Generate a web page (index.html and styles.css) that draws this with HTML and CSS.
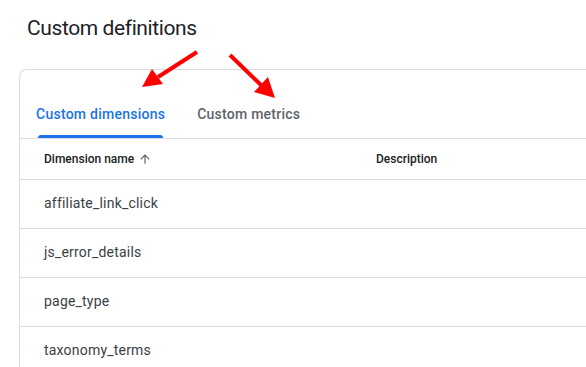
FILE: index.html
```html
<!DOCTYPE html>
<html lang="en">
<head>
  <meta charset="UTF-8">
  <title>Custom definitions</title>
  <link rel="stylesheet" href="styles.css">
</head>
<body>
  <div class="page">
    <h1 class="title">Custom definitions</h1>

    <div class="card">
      <div class="tabs">
        <div class="tab active">Custom dimensions</div>
        <div class="tab">Custom metrics</div>
      </div>

      <div class="row head">
        <div class="col-name">Dimension name
          <svg class="sort" width="14" height="14" viewBox="0 0 24 24"><path d="M4 12l1.41 1.41L11 7.83V20h2V7.83l5.58 5.59L20 12l-8-8-8 8z" fill="#5f6368"/></svg>
        </div>
        <div class="col-desc">Description</div>
      </div>
      <div class="row"><div class="col-name">affiliate_link_click</div><div class="col-desc"></div></div>
      <div class="row"><div class="col-name">js_error_details</div><div class="col-desc"></div></div>
      <div class="row"><div class="col-name">page_type</div><div class="col-desc"></div></div>
      <div class="row"><div class="col-name">taxonomy_terms</div><div class="col-desc"></div></div>
    </div>

    <!-- annotation arrows -->
    <svg class="arrows" width="586" height="367" viewBox="0 0 586 367">
      <line x1="197" y1="52" x2="158" y2="77" stroke="#f00" stroke-width="4"/>
      <polygon points="142,87 152,69 163,84" fill="#f00"/>
      <line x1="230" y1="55" x2="262" y2="86" stroke="#f00" stroke-width="4"/>
      <polygon points="275,98 254,92 268,77" fill="#f00"/>
    </svg>
  </div>
</body>
</html>
```
FILE: styles.css
```css
html, body {
  margin: 0;
  background: #fff;
  overflow: hidden;
}
body {
  font-family: Roboto, "Liberation Sans", sans-serif;
  color: #3c4043;
}
.page {
  position: relative;
  padding: 14px 0 0 19px;
  height: 367px;
  box-sizing: border-box;
}
.title {
  margin: 0 0 26px 8px;
  font-family: Roboto, "Liberation Sans", sans-serif;
  font-weight: 400;
  font-size: 21px;
  line-height: 29px;
  letter-spacing: -0.4px;
  color: #202124;
}
.card {
  width: 620px;
  border: 1px solid #dadce0;
  border-right: none;
  border-radius: 8px 0 0 0;
}
.tabs {
  display: flex;
  padding-top: 20px;
  border-bottom: 1px solid #dadce0;
}
.tab {
  position: relative;
  height: 48px;
  padding: 0 16px;
  display: flex;
  align-items: center;
  font-size: 14px;
  font-weight: 500;
  color: #5f6368;
  letter-spacing: 0.25px;
}
.tab.active {
  color: #1a73e8;
}
.tab.active::after {
  content: "";
  position: absolute;
  left: 18px;
  right: 18px;
  bottom: 0;
  height: 3px;
  background: #1a73e8;
  border-radius: 3px 3px 0 0;
}
.row {
  display: flex;
  align-items: center;
  height: 48px;
  border-bottom: 1px solid #dadce0;
  font-size: 14px;
  letter-spacing: 0.2px;
  color: #3c4043;
}
.row .col-name {
  padding-bottom: 2px;
}
.row.head {
  height: 40px;
  font-size: 12px;
  font-weight: 500;
  letter-spacing: 0;
  color: #202124;
}
.row.head .col-name {
  padding-bottom: 0;
}
.col-name {
  width: 332px;
  padding-left: 24px;
  display: flex;
  align-items: center;
}
.col-desc {
  flex: 1;
}
.sort {
  margin-left: 4px;
}
.arrows {
  position: absolute;
  left: 0;
  top: 0;
}
```
